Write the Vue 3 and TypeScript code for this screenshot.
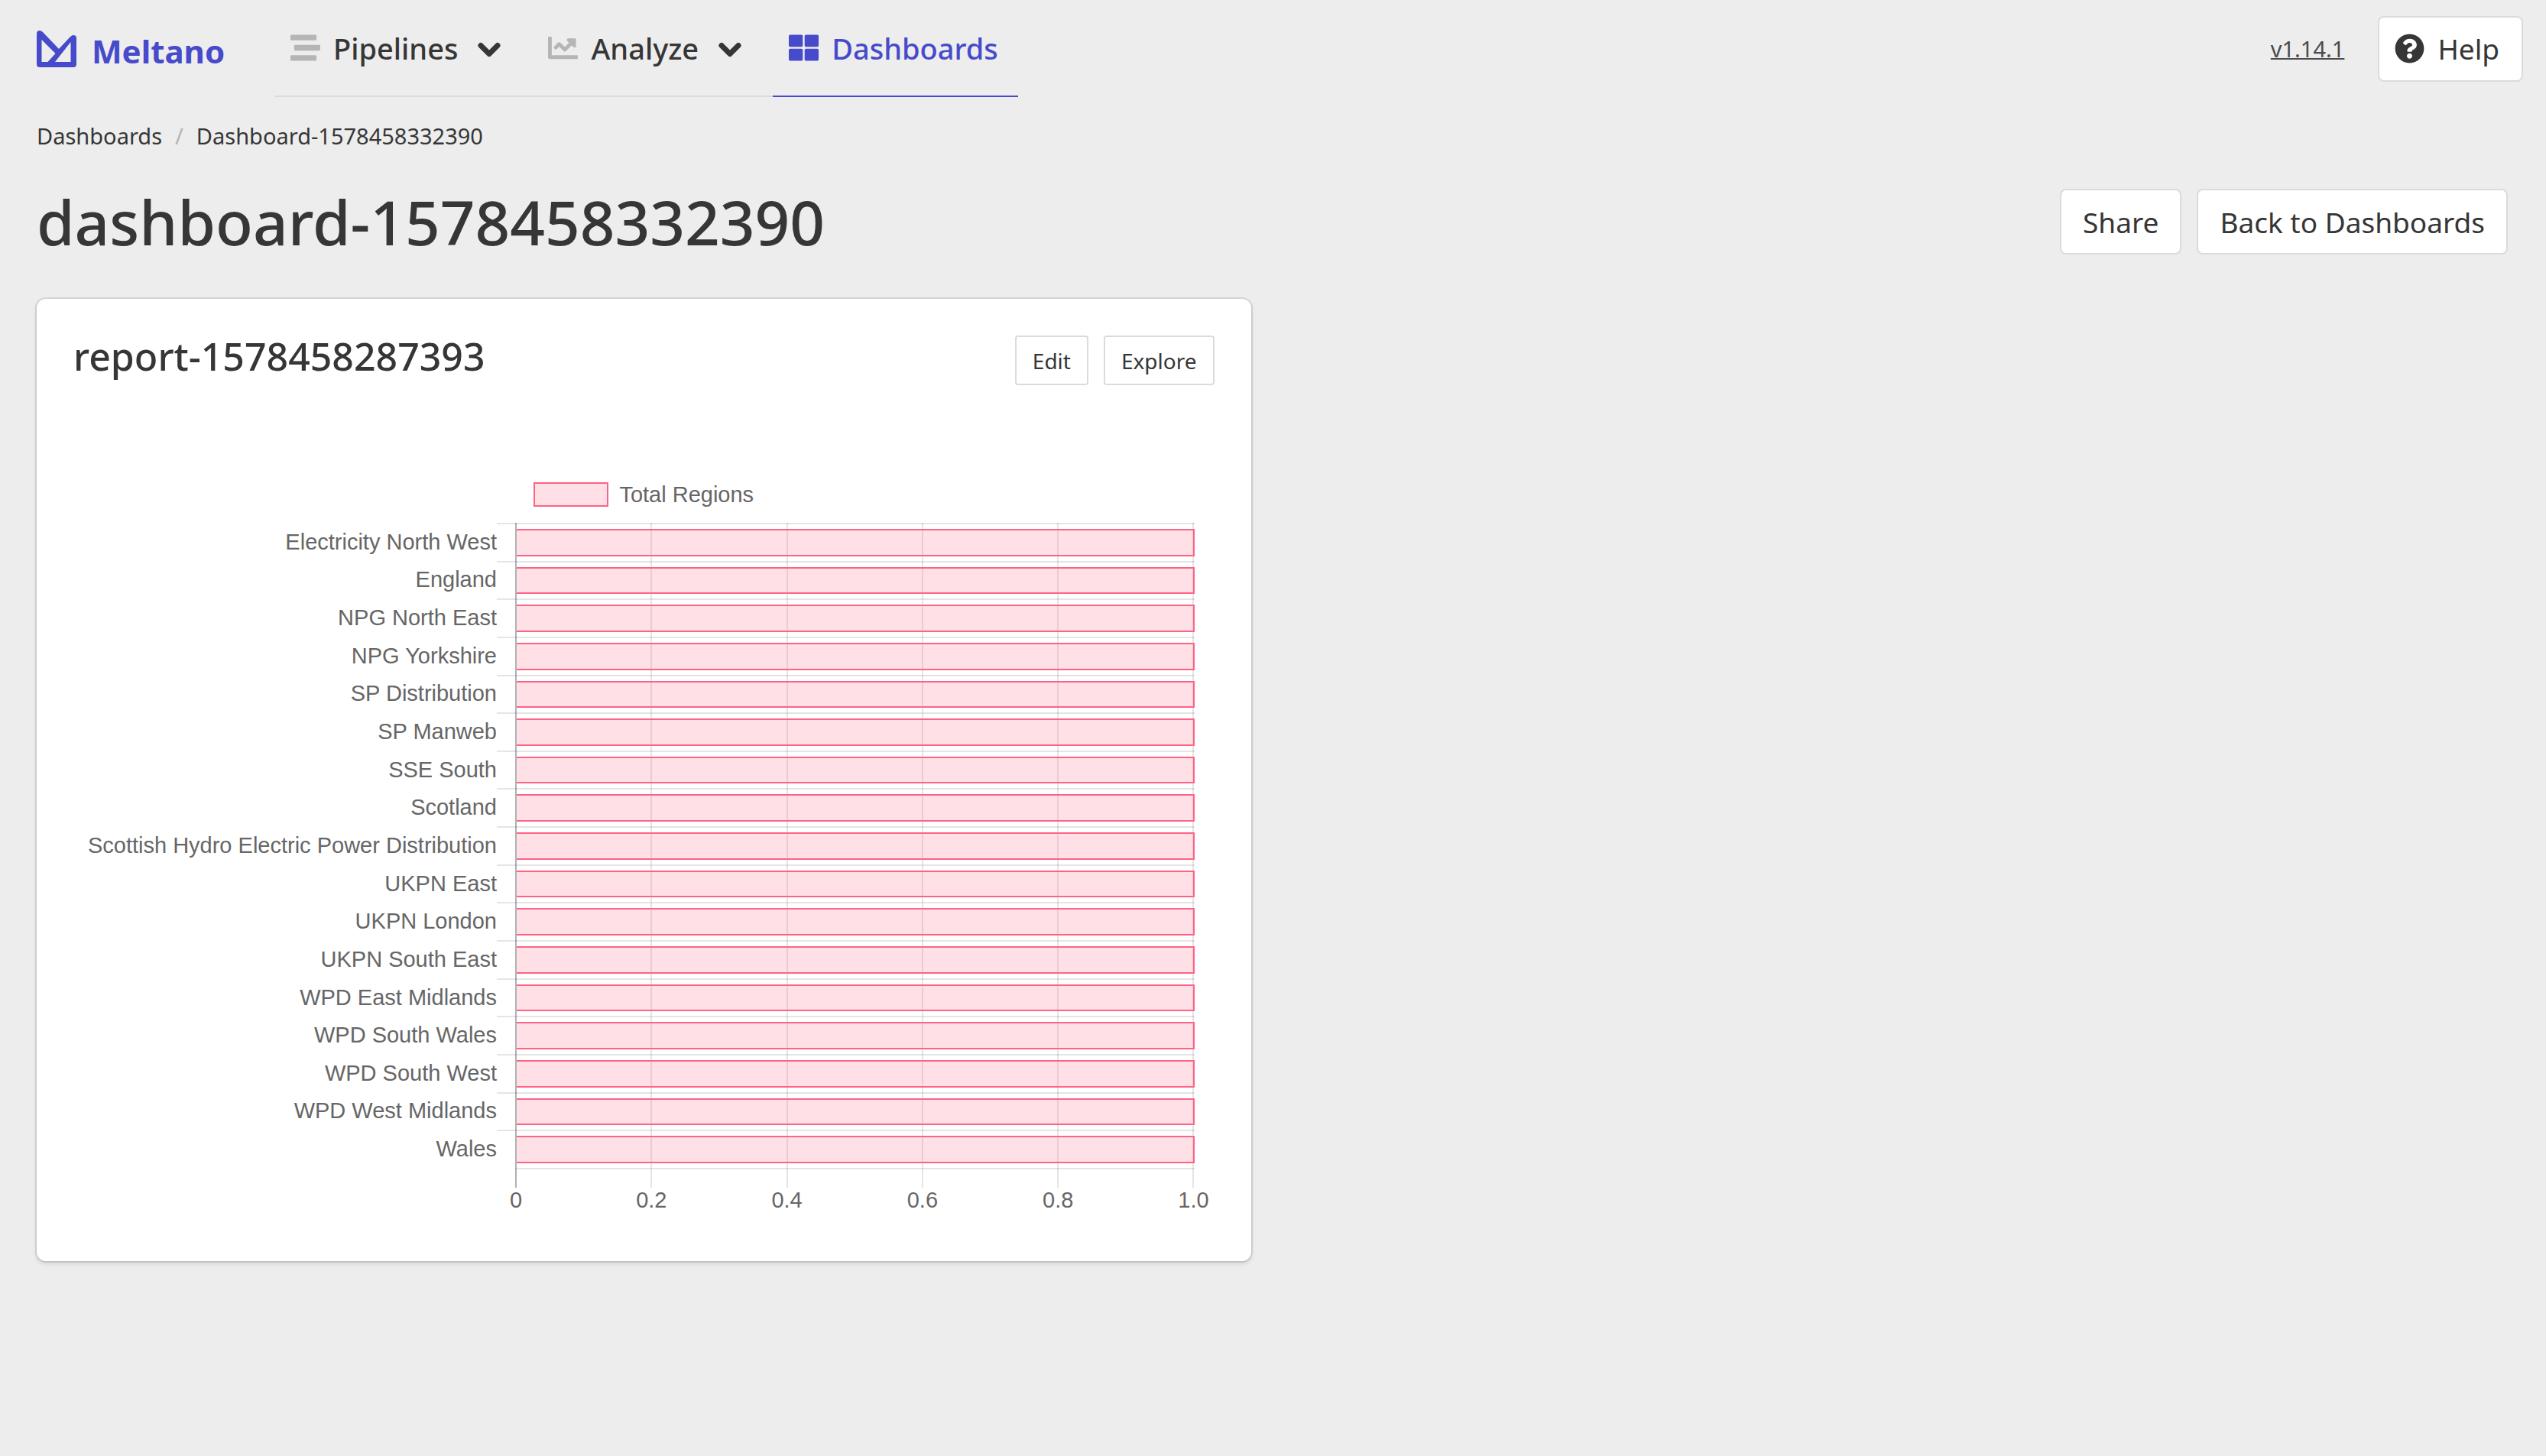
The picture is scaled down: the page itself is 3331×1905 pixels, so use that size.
<script setup lang="ts">
interface NavItem {
  label: string
  icon: string
  menu: boolean
  active: boolean
}

interface RegionRow {
  name: string
  value: number
}

const navItems: NavItem[] = [
  {
    label: 'Pipelines',
    icon: 'M16 128h416c8.84 0 16-7.16 16-16V48c0-8.84-7.16-16-16-16H16C7.16 32 0 39.16 0 48v64c0 8.84 7.16 16 16 16zm480 80H80c-8.84 0-16 7.16-16 16v64c0 8.84 7.16 16 16 16h416c8.84 0 16-7.16 16-16v-64c0-8.84-7.16-16-16-16zm-64 176H16c-8.84 0-16 7.16-16 16v64c0 8.84 7.16 16 16 16h416c8.84 0 16-7.16 16-16v-64c0-8.84-7.16-16-16-16z',
    menu: true,
    active: false,
  },
  {
    label: 'Analyze',
    icon: 'M496 384H64V80c0-8.84-7.16-16-16-16H16C7.16 64 0 71.16 0 80v336c0 17.67 14.33 32 32 32h464c8.84 0 16-7.16 16-16v-32c0-8.84-7.16-16-16-16zM464 96H345.94c-21.38 0-32.09 25.85-16.97 40.97l32.4 32.4L288 242.75l-73.37-73.37c-12.5-12.5-32.76-12.5-45.25 0l-68.69 68.69c-6.25 6.25-6.25 16.38 0 22.63l22.62 22.62c6.25 6.25 16.38 6.25 22.63 0L192 237.25l73.37 73.37c12.5 12.5 32.76 12.5 45.25 0l96-96 32.4 32.4c15.12 15.12 40.97 4.41 40.97-16.97V112c.01-8.84-7.15-16-16-16z',
    menu: true,
    active: false,
  },
  {
    label: 'Dashboards',
    icon: 'M296 32h192c13.255 0 24 10.745 24 24v160c0 13.255-10.745 24-24 24H296c-13.255 0-24-10.745-24-24V56c0-13.255 10.745-24 24-24zm-80 0H24C10.745 32 0 42.745 0 56v160c0 13.255 10.745 24 24 24h192c13.255 0 24-10.745 24-24V56c0-13.255-10.745-24-24-24zM0 296v160c0 13.255 10.745 24 24 24h192c13.255 0 24-10.745 24-24V296c0-13.255-10.745-24-24-24H24c-13.255 0-24 10.745-24 24zm296 184h192c13.255 0 24-10.745 24-24V296c0-13.255-10.745-24-24-24H296c-13.255 0-24 10.745-24 24v160c0 13.255 10.745 24 24 24z',
    menu: false,
    active: true,
  },
]

const regions: RegionRow[] = [
  'Electricity North West',
  'England',
  'NPG North East',
  'NPG Yorkshire',
  'SP Distribution',
  'SP Manweb',
  'SSE South',
  'Scotland',
  'Scottish Hydro Electric Power Distribution',
  'UKPN East',
  'UKPN London',
  'UKPN South East',
  'WPD East Midlands',
  'WPD South Wales',
  'WPD South West',
  'WPD West Midlands',
  'Wales',
].map((name) => ({ name, value: 1 }))

const ticks: string[] = ['0', '0.2', '0.4', '0.6', '0.8', '1.0']
</script>

<template>
  <div class="page">
    <header class="topbar">
      <a class="brand" href="#">
        <svg class="brand-mark" viewBox="0 0 52 48" aria-hidden="true">
          <path
            fill-rule="evenodd"
            d="M0 4Q0 0 4 0Q6 0 8 2L29 24L44 8Q46 6 48 6Q52 6 52 10V44Q52 48 48 48H4Q0 48 0 44ZM6.500 12V41H14.500L24.500 30ZM44.500 15V41H24Z"
          />
        </svg>
        <span class="brand-name">Meltano</span>
      </a>

      <nav class="nav" aria-label="Main">
        <a
          v-for="item in navItems"
          :key="item.label"
          href="#"
          class="nav-item"
          :class="{ active: item.active }"
        >
          <svg class="nav-icon" viewBox="0 0 512 512" aria-hidden="true">
            <path :d="item.icon" />
          </svg>
          <span>{{ item.label }}</span>
          <svg v-if="item.menu" class="chevron" viewBox="0 0 30 20" aria-hidden="true">
            <path d="M4 4.500L15 15.500L26 4.500" />
          </svg>
        </a>
      </nav>

      <div class="topbar-end">
        <a class="version" href="#">v1.14.1</a>
        <button type="button" class="button help">
          <svg class="help-icon" viewBox="0 0 512 512" aria-hidden="true">
            <path
              d="M504 256c0 136.997-111.043 248-248 248S8 392.997 8 256C8 119.083 119.043 8 256 8s248 111.083 248 248zM262.655 90c-54.497 0-89.255 22.957-116.549 63.758-3.536 5.286-2.353 12.415 2.715 16.258l34.699 26.31c5.205 3.947 12.621 3.008 16.665-2.122 17.864-22.658 30.113-35.797 57.303-35.797 20.429 0 45.698 13.148 45.698 32.958 0 14.976-12.363 22.667-32.534 33.976C247.128 238.528 216 254.941 216 296v4c0 6.627 5.373 12 12 12h56c6.627 0 12-5.373 12-12v-1.333c0-28.462 83.186-29.647 83.186-106.667 0-58.002-60.165-102-116.531-102zM256 338c-25.365 0-46 20.635-46 46 0 25.364 20.635 46 46 46s46-20.636 46-46c0-25.364-20.635-46-46-46z"
            />
          </svg>
          <span>Help</span>
        </button>
      </div>
    </header>

    <main class="content">
      <nav class="breadcrumb" aria-label="Breadcrumb">
        <a href="#">Dashboards</a>
        <span class="separator">/</span>
        <a href="#" aria-current="page">Dashboard-1578458332390</a>
      </nav>

      <div class="heading">
        <h1>dashboard-1578458332390</h1>
        <div class="actions">
          <button type="button" class="button">Share</button>
          <a href="#" class="button">Back to Dashboards</a>
        </div>
      </div>

      <div class="reports">
        <section class="card">
          <div class="card-head">
            <h2>report-1578458287393</h2>
            <div class="actions">
              <button type="button" class="button small">Edit</button>
              <button type="button" class="button small">Explore</button>
            </div>
          </div>

          <figure class="chart">
            <figcaption class="legend">
              <span class="swatch"></span>
              <span>Total Regions</span>
            </figcaption>

            <div class="gridlines">
              <span v-for="tick in ticks" :key="tick" class="gridline"></span>
            </div>

            <ul class="rows">
              <li v-for="row in regions" :key="row.name" class="row">
                <span class="row-label">{{ row.name }}</span>
                <span class="row-track">
                  <span class="bar" :style="{ width: row.value * 100 + '%' }"></span>
                </span>
              </li>
            </ul>

            <div class="axis">
              <span v-for="tick in ticks" :key="tick" class="axis-label">{{ tick }}</span>
            </div>
          </figure>
        </section>
      </div>
    </main>
  </div>
</template>

<style>
html,
body {
  background: #ededed;
}
</style>

<style scoped>
.page {
  color: #363636;
  font-family: 'Noto Sans', 'Open Sans', sans-serif;
  font-size: 29px;
}

.page *,
.page {
  box-sizing: border-box;
}

a {
  color: inherit;
  text-decoration: none;
}

h1,
h2 {
  margin: 0;
  font-weight: 500;
}

.topbar {
  display: flex;
  align-items: stretch;
  padding: 0 30px 0 48px;
}

.brand {
  display: flex;
  align-items: center;
  gap: 20px;
  width: 311px;
  color: #464acb;
}

.brand-mark {
  width: 52px;
  height: 48px;
  fill: currentColor;
}

.brand-name {
  padding-top: 6px;
  font-size: 42px;
  font-weight: 700;
  line-height: 56px;
}

.nav {
  display: flex;
}

.nav-item {
  display: flex;
  align-items: center;
  height: 127px;
  padding: 0 26px 0 21px;
  border-bottom: 2px solid #dbdbdb;
  font-size: 38px;
  font-weight: 500;
}

.nav-item.active {
  border-color: #464acb;
  color: #464acb;
}

.nav-icon {
  width: 39px;
  height: 39px;
  margin-right: 17px;
  fill: #b5b5b5;
}

.active .nav-icon {
  fill: currentColor;
}

.chevron {
  width: 30px;
  height: 20px;
  margin: 4px 15px 0 26px;
  fill: none;
  stroke: currentColor;
  stroke-width: 7;
  stroke-linecap: round;
  stroke-linejoin: round;
}

.topbar-end {
  display: flex;
  align-items: center;
  gap: 44px;
  margin-left: auto;
}

.version {
  color: #4a4a4a;
  text-decoration: underline;
  text-decoration-thickness: 2px;
}

.button {
  display: flex;
  align-items: center;
  justify-content: center;
  height: 86px;
  padding: 0 28px;
  border: 2px solid #dbdbdb;
  border-radius: 8px;
  background: #fff;
  color: #363636;
  font-family: inherit;
  font-size: 37px;
}

.button.help {
  gap: 17px;
  padding: 0 29px 0 20px;
}

.help-icon {
  width: 39px;
  height: 39px;
  fill: currentColor;
}

.button.small {
  height: 65px;
  padding: 0 21px;
  border-radius: 4px;
  font-size: 28px;
}

.content {
  padding: 30px 50px 48px 48px;
}

.breadcrumb {
  display: flex;
  line-height: 42px;
}

.separator {
  margin: 0 17px;
  color: #b5b5b5;
}

.heading {
  display: flex;
  align-items: center;
  justify-content: space-between;
  margin: 48px 0 58px;
}

h1 {
  font-size: 80px;
  line-height: 86px;
}

.actions {
  display: flex;
  gap: 20px;
}

.reports {
  display: grid;
  grid-template-columns: repeat(2, minmax(0, 1fr));
  gap: 56px;
}

.card {
  padding: 48px 48px 64px;
  border-radius: 12px;
  background: #fff;
  box-shadow:
    0 4px 6px rgba(10, 10, 10, 0.1),
    0 0 0 2px rgba(10, 10, 10, 0.1);
}

.card-head {
  display: flex;
  align-items: flex-start;
  justify-content: space-between;
}

h2 {
  font-size: 50px;
  line-height: 54px;
}

.chart {
  display: grid;
  grid-template-columns: 554px 24px minmax(0, 1fr);
  grid-template-rows: auto 844px 26px auto;
  margin: 127px 0 0;
  padding-right: 26px;
  color: #666;
  font-family: 'Liberation Sans', Arial, sans-serif;
  line-height: 32px;
}

.legend {
  grid-column: 1 / -1;
  display: flex;
  justify-content: center;
  gap: 14px;
  margin-bottom: 21px;
  padding-left: 26px;
}

.swatch {
  width: 98px;
  height: 32px;
  border: 2px solid #ff6384;
  background: #ffe0e6;
}

/* The background draws the closing line under the last row. */
.gridlines {
  grid-area: 2 / 3 / 4 / 4;
  display: flex;
  justify-content: space-between;
  background: linear-gradient(rgba(0, 0, 0, 0.1), rgba(0, 0, 0, 0.1)) 0 844px / 100% 2px no-repeat;
}

.gridline {
  width: 2px;
  background: rgba(0, 0, 0, 0.1);
}

.gridline:first-child {
  background: rgba(0, 0, 0, 0.3);
}

.rows {
  grid-area: 2 / 1 / 3 / 4;
  display: flex;
  flex-direction: column;
  margin: 0;
  padding: 0;
  list-style: none;
}

.row {
  flex: 1;
  display: grid;
  grid-template-columns: 554px minmax(0, 1fr);
  min-height: 0;
}

.row-label {
  align-self: center;
  text-align: right;
  white-space: nowrap;
}

.row-track {
  display: flex;
  padding: 6px 0 6px 26px;
  border-top: 2px solid rgba(0, 0, 0, 0.1);
}

.bar {
  border: 2px solid #ff6384;
  border-left: 0;
  background: rgba(255, 99, 132, 0.2);
}

.axis {
  grid-area: 4 / 3 / 5 / 4;
  display: flex;
  justify-content: space-between;
}

/* Boxes as narrow as a gridline keep every number centred on its line. */
.axis-label {
  display: flex;
  justify-content: center;
  width: 2px;
  white-space: nowrap;
}
</style>
